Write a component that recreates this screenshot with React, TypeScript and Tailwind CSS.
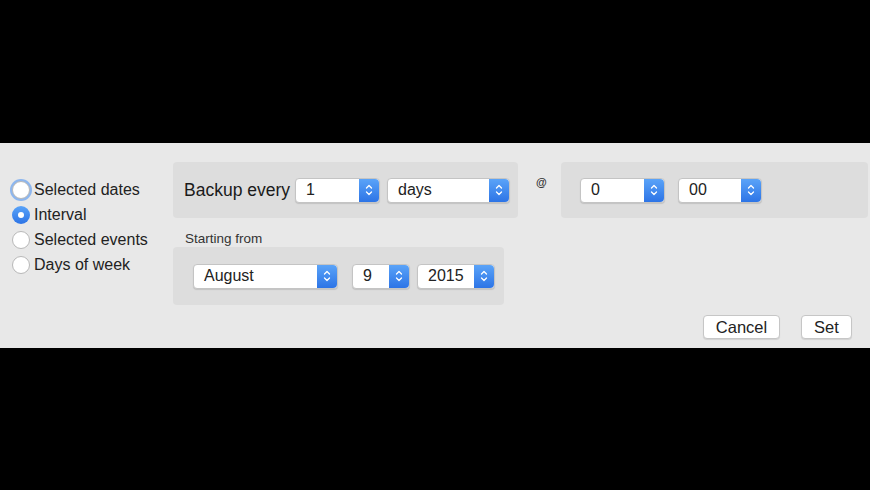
import React from "react";

const font = { fontFamily: '"Liberation Sans", Arial, sans-serif' };

const Stepper: React.FC = () => (
  <div className="flex h-full w-[20px] items-center justify-center rounded-r-[4px] bg-gradient-to-b from-[#5aa3f8] to-[#2d74e6]">
    <svg width="8" height="14" viewBox="0 0 8 14" fill="none">
      <path d="M1.5 5 L4 2.5 L6.5 5" stroke="white" strokeWidth="1.3" strokeLinecap="round" strokeLinejoin="round" />
      <path d="M1.5 9 L4 11.5 L6.5 9" stroke="white" strokeWidth="1.3" strokeLinecap="round" strokeLinejoin="round" />
    </svg>
  </div>
);

const Select: React.FC<{ value: string; w: string }> = ({ value, w }) => (
  <div
    className={`flex h-[25px] ${w} items-stretch rounded-[4px] border border-[#c4c4c4] bg-white shadow-[0_1px_1px_rgba(0,0,0,0.12)]`}
  >
    <div className="flex flex-1 items-center pl-[10px] text-[16px] text-[#222]">{value}</div>
    <Stepper />
  </div>
);

const Radio: React.FC<{ label: string; checked?: boolean; focused?: boolean }> = ({
  label,
  checked,
  focused,
}) => (
  <div className="flex h-[25px] items-center">
    {checked ? (
      <div className="flex h-[18px] w-[18px] items-center justify-center rounded-full bg-gradient-to-b from-[#5aa3f8] to-[#2d74e6]">
        <div className="h-[6px] w-[6px] rounded-full bg-white" />
      </div>
    ) : (
      <div
        className={`h-[18px] w-[18px] rounded-full border border-[#b8b8b8] bg-white ${
          focused ? "shadow-[0_0_0_2px_#8db6ee]" : ""
        }`}
      />
    )}
    <span className="ml-[4px] text-[16px] text-[#222]">{label}</span>
  </div>
);

const Button: React.FC<{ label: string; w: string }> = ({ label, w }) => (
  <div
    className={`flex h-[24px] ${w} items-center justify-center rounded-[4px] border border-[#c6c6c6] bg-white text-[16.5px] text-[#222] shadow-[0_1px_1px_rgba(0,0,0,0.1)]`}
  >
    {label}
  </div>
);

export default function App() {
  return (
    <div className="flex h-[490px] w-[870px] flex-col bg-black" style={font}>
      <div className="h-[143px]" />
      <div className="flex h-[205px] bg-[#e8e8e8]">
        <div className="w-[173px] pl-[12px] pt-[34px]">
          <Radio label="Selected dates" focused />
          <Radio label="Interval" checked />
          <Radio label="Selected events" />
          <Radio label="Days of week" />
        </div>
        <div className="flex flex-1 flex-col pt-[19px]">
          <div className="flex">
            <div className="flex h-[56px] w-[345px] items-center rounded-[4px] bg-[#dddddd] pl-[11px]">
              <span className="mr-[5px] text-[17.5px] text-[#1a1a1a]">Backup every</span>
              <Select value="1" w="w-[85px]" />
              <div className="w-[7px]" />
              <Select value="days" w="w-[123px]" />
            </div>
            <div className="ml-[18px] mt-[12px] w-[25px] text-[11px] font-bold text-[#333]">@</div>
            <div className="flex h-[56px] w-[307px] items-center rounded-[4px] bg-[#dddddd] pl-[19px]">
              <Select value="0" w="w-[85px]" />
              <div className="w-[13px]" />
              <Select value="00" w="w-[84px]" />
            </div>
          </div>
          <div className="ml-[12px] mt-[13px] text-[13.5px] leading-[16px] text-[#333]">Starting from</div>
          <div className="flex h-[58px] w-[331px] items-center rounded-[4px] bg-[#dddddd] pl-[20px]">
            <Select value="August" w="w-[145px]" />
            <div className="w-[14px]" />
            <Select value="9" w="w-[58px]" />
            <div className="w-[7px]" />
            <Select value="2015" w="w-[78px]" />
          </div>
          <div className="mt-[10px] flex justify-end gap-[21px] pr-[18px]">
            <Button label="Cancel" w="w-[77px]" />
            <Button label="Set" w="w-[51px]" />
          </div>
        </div>
      </div>
      <div className="flex-1" />
    </div>
  );
}
